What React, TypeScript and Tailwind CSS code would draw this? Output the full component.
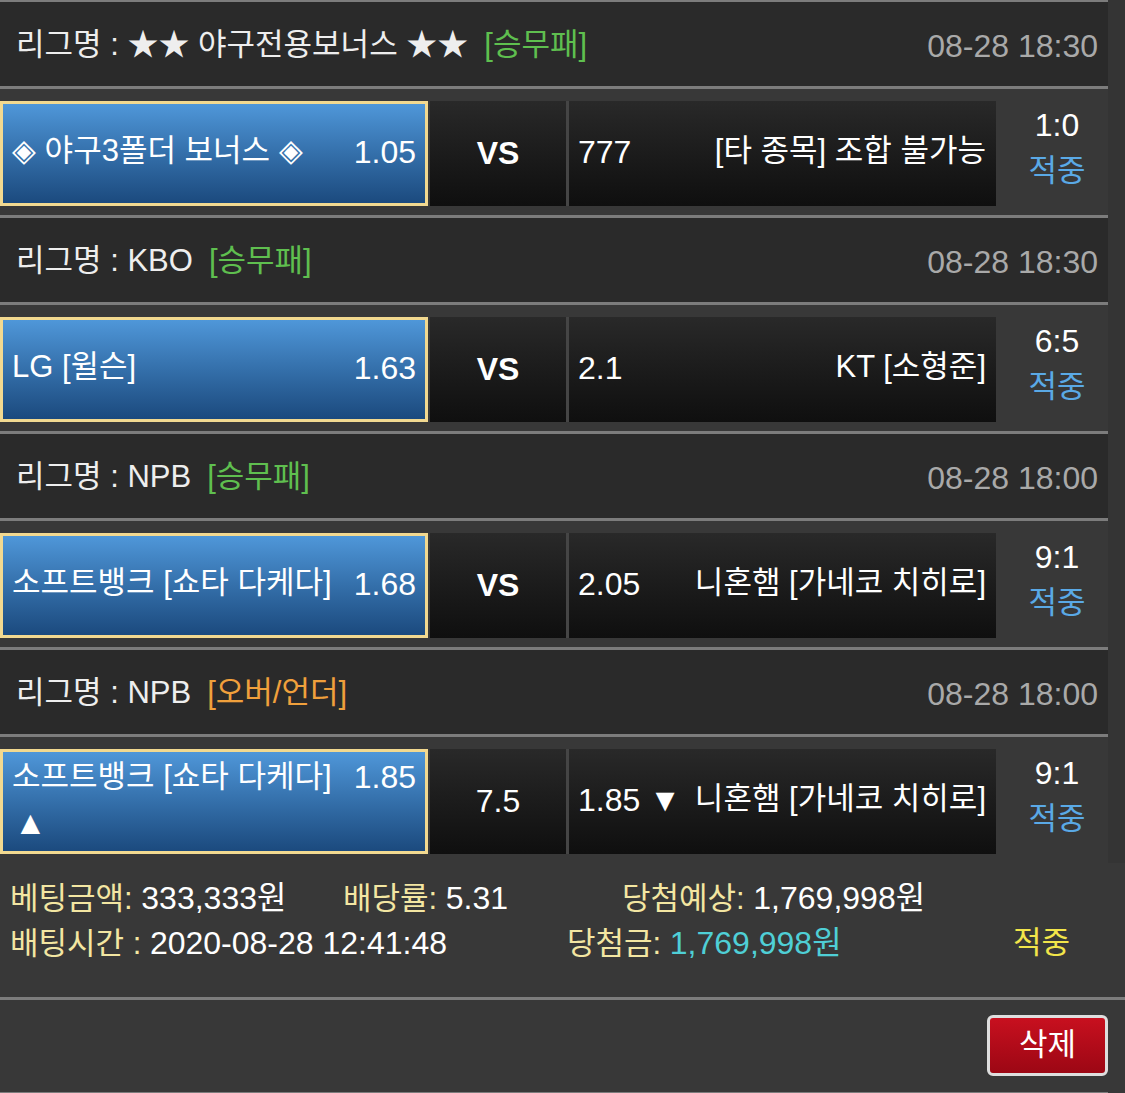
const font = "font-['Liberation_Sans','Noto_Sans_CJK_KR',sans-serif]";

type Match = {
  league: string;
  tag: string;
  tagColor: string;
  time: string;
  home: string;
  homeOdds: string;
  mid: string;
  awayOdds: string;
  away: string;
  score: string;
  wrapHome?: boolean;
};

const matches: Match[] = [
  {
    league: "★★ 야구전용보너스 ★★",
    tag: "[승무패]",
    tagColor: "text-[#5fbf4f]",
    time: "08-28 18:30",
    home: "◈ 야구3폴더 보너스 ◈",
    homeOdds: "1.05",
    mid: "VS",
    awayOdds: "777",
    away: "[타 종목] 조합 불가능",
    score: "1:0",
  },
  {
    league: "KBO",
    tag: "[승무패]",
    tagColor: "text-[#5fbf4f]",
    time: "08-28 18:30",
    home: "LG [윌슨]",
    homeOdds: "1.63",
    mid: "VS",
    awayOdds: "2.1",
    away: "KT [소형준]",
    score: "6:5",
  },
  {
    league: "NPB",
    tag: "[승무패]",
    tagColor: "text-[#5fbf4f]",
    time: "08-28 18:00",
    home: "소프트뱅크 [쇼타 다케다]",
    homeOdds: "1.68",
    mid: "VS",
    awayOdds: "2.05",
    away: "니혼햄 [가네코 치히로]",
    score: "9:1",
  },
  {
    league: "NPB",
    tag: "[오버/언더]",
    tagColor: "text-[#f0a03c]",
    time: "08-28 18:00",
    home: "소프트뱅크 [쇼타 다케다]",
    homeOdds: "1.85",
    mid: "7.5",
    awayOdds: "1.85 ▼",
    away: "니혼햄 [가네코 치히로]",
    score: "9:1",
    wrapHome: true,
  },
];

function MatchBlock({ m, last }: { m: Match; last: boolean }) {
  return (
    <div>
      <div className="flex h-[84px] items-center justify-between bg-[#2a2a2a] pl-[16px] pr-[10px] pt-[3px] text-[31px]">
        <div className="flex items-center text-[#eeeeee]">
          <span>리그명 : {m.league}</span>
          <span className={`ml-[16px] ${m.tagColor}`}>{m.tag}</span>
        </div>
        <span className="text-[32px] text-[#a9a9a9]">{m.time}</span>
      </div>
      <div className="h-[3px] bg-[#7c7c7c]" />
      <div className="flex h-[126px] pb-[9px] pt-[12px]">
        <div className="h-[105px] w-[428px] border-[3px] border-[#f2d990] bg-gradient-to-b from-[#4f97d9] to-[#1b4a7e] px-[9px] text-[31px] text-white">
          {m.wrapHome ? (
            <div className="flex h-full flex-col pt-[4px]">
              <div className="flex justify-between leading-[42px]">
                <span>{m.home}</span>
                <span className="text-[32px]">{m.homeOdds}</span>
              </div>
              <div className="mt-[4px] pl-[2px] text-[33px] leading-[42px]">▲</div>
            </div>
          ) : (
            <div className="flex h-full items-center justify-between pb-[4px]">
              <span>{m.home}</span>
              <span className="text-[32px]">{m.homeOdds}</span>
            </div>
          )}
        </div>
        <div className="ml-[2px] flex h-[105px] w-[136px] items-center justify-center bg-gradient-to-b from-[#292929] to-[#0f0f0f] pb-[2px] text-[32px] text-white">
          <span className={m.mid === "VS" ? "font-bold" : ""}>{m.mid}</span>
        </div>
        <div className="w-[3px] bg-[#454545]" />
        <div className="flex h-[105px] w-[427px] items-center justify-between bg-gradient-to-b from-[#292929] to-[#0f0f0f] pb-[4px] pl-[9px] pr-[10px] text-[31px] text-white">
          <span className="text-[32px]">{m.awayOdds}</span>
          <span>{m.away}</span>
        </div>
        <div className="flex h-[105px] flex-1 flex-col items-center justify-center pb-[12px] pl-[10px] text-[31px] leading-[45px]">
          <span className="text-[32px] text-white">{m.score}</span>
          <span className="text-[#5aa9e6]">적중</span>
        </div>
      </div>
      {!last && <div className="h-[3px] bg-[#7c7c7c]" />}
    </div>
  );
}

export default function App() {
  return (
    <div className={`${font} min-h-[1093px] w-[1125px] bg-[#383838]`}>
      <div className="flex">
        <div className="w-[1108px]">
          <div className="h-[2px] bg-[#7c7c7c]" />
          {matches.map((m, i) => (
            <MatchBlock key={i} m={m} last={i === matches.length - 1} />
          ))}
        </div>
        <div className="flex-1 bg-[#343434]" />
      </div>
      <div className="flex h-[134px] flex-col px-[10px] pt-[13px] text-[31px]">
        <div className="flex h-[45px] items-center">
          <span className="w-[333px]">
            <span className="text-[#f3e6a2]">베팅금액: </span>
            <span className="text-[32px] text-white">333,333원</span>
          </span>
          <span className="w-[279px]">
            <span className="text-[#f3e6a2]">배당률: </span>
            <span className="text-[32px] text-white">5.31</span>
          </span>
          <span>
            <span className="text-[#f3e6a2]">당첨예상: </span>
            <span className="text-[32px] text-white">1,769,998원</span>
          </span>
        </div>
        <div className="flex h-[45px] items-center">
          <span className="w-[557px]">
            <span className="text-[#f3e6a2]">배팅시간 : </span>
            <span className="text-[32px] text-white">2020-08-28 12:41:48</span>
          </span>
          <span className="w-[446px]">
            <span className="text-[#f3e6a2]">당첨금: </span>
            <span className="text-[32px] text-[#4fcfd6]">1,769,998원</span>
          </span>
          <span className="text-[#f2e54a]">적중</span>
        </div>
      </div>
      <div className="h-[3px] bg-[#7c7c7c]" />
      <div className="w-[1108px]">
        <div className="flex justify-end pb-[16px] pt-[15px]">
          <button className="flex h-[61px] w-[121px] items-center justify-center rounded-[6px] border-[3px] border-[#dedede] bg-gradient-to-b from-[#c8101f] to-[#9c0714] text-[31px] text-white">
            삭제
          </button>
        </div>
        <div className="h-[3px] bg-[#7c7c7c]" />
      </div>
    </div>
  );
}
